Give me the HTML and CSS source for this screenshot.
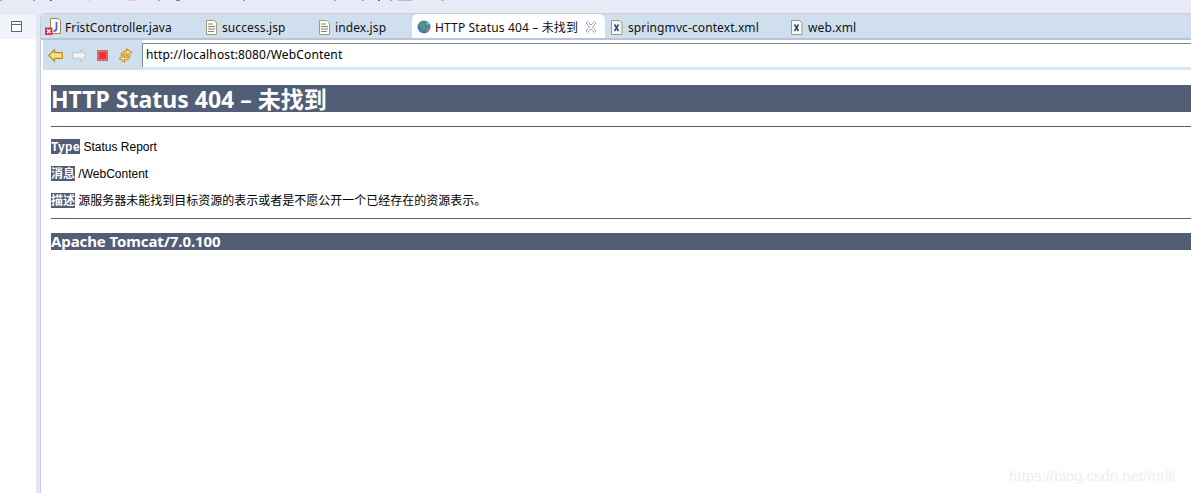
FILE: index.html
```html
<!DOCTYPE html>
<html lang="zh">
<head>
<meta charset="utf-8">
<title>HTTP Status 404</title>
<link rel="stylesheet" href="styles.css">
</head>
<body>
<div class="topbar">
  <svg class="traces" width="460" height="2" viewBox="0 0 460 2">
    <g fill="#9d9a86">
      <rect x="0" width="2" height="1"/><rect x="33" width="2" height="1"/><rect x="50" width="2" height="1" fill="#3f6f6a"/>
      <rect x="88" width="2" height="1" fill="#c9dccf"/><rect x="128" width="9" height="1" fill="#f0c6cc"/><rect x="158" width="2" height="1"/>
      <rect x="176" width="4" height="1" fill="#7d8090"/><rect x="243" width="2" height="1"/><rect x="334" width="2" height="1"/>
      <rect x="362" width="2" height="1"/><rect x="378" width="2" height="1" fill="#1f9a55"/><rect x="390" width="2" height="1"/>
      <rect x="398" width="14" height="1" fill="#bdbdb8"/><rect x="441" width="3" height="1" fill="#bdbdb8"/>
    </g>
  </svg>
</div>
<div class="main">
  <aside class="side">
    <div class="side-head">
      <svg class="restore" width="11" height="11" viewBox="0 0 11 11"><rect x="0.5" y="0.5" width="10" height="10" fill="#fff" stroke="#666"/><path d="M1 3.500H10" stroke="#666"/></svg>
    </div>
  </aside>
  <section class="editor">
    <div class="tabs">
      <div class="tab w1">
        <svg class="ico" width="18" height="18" viewBox="0 0 18 18"><path d="M6.500 .5H14L16.500 3V15.500H6.500Z" fill="#fff" stroke="#a2854e"/><path d="M12.500 4V10.500Q12.500 13 9.500 13" fill="none" stroke="#3f6fb0" stroke-width="1.800"/><rect x="1" y="9.500" width="7.500" height="7.500" fill="#d9344a"/><path d="M3 11.500l3.500 3.500M6.500 11.500L3 15" stroke="#fff" stroke-width="1.300"/></svg>
        <span>FristController.java</span>
      </div>
      <div class="tab w2">
        <svg class="ico" width="13" height="15" viewBox="0 0 13 15"><path d="M1.500 .5H9L11.500 3V14.500H1.500Z" fill="#fff" stroke="#a39a70"/><path d="M3 4H8" stroke="#c9703a"/><path d="M3 6.500H10" stroke="#4f9a63"/><path d="M3 9H10" stroke="#5a7fc0"/><path d="M3 11.500H9" stroke="#c9703a"/></svg>
        <span>success.jsp</span>
      </div>
      <div class="tab w3">
        <svg class="ico" width="13" height="15" viewBox="0 0 13 15"><path d="M1.500 .5H9L11.500 3V14.500H1.500Z" fill="#fff" stroke="#a39a70"/><path d="M3 4H8" stroke="#c9703a"/><path d="M3 6.500H10" stroke="#4f9a63"/><path d="M3 9H10" stroke="#5a7fc0"/><path d="M3 11.500H9" stroke="#c9703a"/></svg>
        <span>index.jsp</span>
      </div>
      <div class="tab tab-active">
        <svg class="ico" width="14" height="14" viewBox="0 0 14 14"><circle cx="7" cy="7" r="6.500" fill="#3f7fbf"/><path d="M2 4Q5 1 8 2L7 5L9 7L6 10L4 7L2 6Z" fill="#5f9a52"/><path d="M9 9L12 7.500L11.500 11L9.500 12Z" fill="#b5803c"/><path d="M9 2L12 4L10 5Z" fill="#a7d4ec"/></svg>
        <span class="tab-title">HTTP Status 404 – 未找到</span>
        <svg class="close" width="12" height="12" viewBox="0 0 12 12"><path d="M1 2L2.500 .5L6 4L9.500 .5L11 2L7.500 6L11 10L9.500 11.500L6 8L2.500 11.500L1 10L4.500 6Z" fill="#fff" stroke="#9ca0a4"/></svg>
      </div>
      <div class="tab w5">
        <svg class="ico" width="12" height="15" viewBox="0 0 12 15"><path d="M.5 .5H8.500L11 3V14.500H.5Z" fill="#f4f6fa" stroke="#a39a70"/><path d="M3.500 4.500L7.500 11M7.500 4.500L3.500 11" stroke="#2f4478" stroke-width="1.500"/></svg>
        <span>springmvc-context.xml</span>
      </div>
      <div class="tab w6">
        <svg class="ico" width="12" height="15" viewBox="0 0 12 15"><path d="M.5 .5H8.500L11 3V14.500H.5Z" fill="#f4f6fa" stroke="#a39a70"/><path d="M3.500 4.500L7.500 11M7.500 4.500L3.500 11" stroke="#2f4478" stroke-width="1.500"/></svg>
        <span>web.xml</span>
      </div>
    </div>
    <div class="tabline"></div>
    <div class="toolbar">
      <div class="tools">
        <svg width="15" height="13" viewBox="0 0 15 13"><path d="M6.500 .7L.8 6.500L6.500 12.300V9.300H14.300V3.700H6.500Z" fill="#fbe08a" stroke="#b98a1e" stroke-width="1.200"/></svg>
        <svg width="15" height="13" viewBox="0 0 15 13"><path d="M8.500 .7L14.200 6.500L8.500 12.300V9.300H.7V3.700H8.500Z" fill="#f2f3f3" stroke="#c8cbce" stroke-width="1.200"/></svg>
        <svg class="stop" width="11" height="11" viewBox="0 0 11 11"><rect x=".5" y=".5" width="10" height="10" fill="#ee3338" stroke="#c4686c"/><rect x="1.500" y="1.500" width="8" height="8" fill="none" stroke="#f26a6e"/></svg>
        <svg width="15" height="15" viewBox="0 0 15 15"><path d="M3 7.500Q3 3 8.500 3V.8L14 4.500L8.500 7.800V5.500Q5.500 5.500 3 7.500Z" fill="#fbd66a" stroke="#c08a1e"/><path d="M12 7.500Q12 12 6.500 12V14.200L1 10.500L6.500 7.200V9.500Q9.500 9.500 12 7.500Z" fill="#fbd66a" stroke="#c08a1e"/></svg>
      </div>
      <div class="url">http://localhost:8080/WebContent</div>
    </div>
    <div class="page">
      <h1>HTTP Status 404 – 未找到</h1>
      <hr>
      <p><b class="wide">Type</b> Status Report</p>
      <p><b>消息</b> /WebContent</p>
      <p><b>描述</b> 源服务器未能找到目标资源的表示或者是不愿公开一个已经存在的资源表示。</p>
      <hr class="hr2">
      <h3>Apache Tomcat/7.0.100</h3>
    </div>
  </section>
</div>
<div class="watermark">https://blog.csdn.net/mrlli</div>
</body>
</html>
```
FILE: styles.css
```css
* { box-sizing: border-box; }
html, body { margin: 0; height: 100%; overflow: hidden; }
body {
  width: 1191px;
  height: 493px;
  position: relative;
  background: #e3e7f6;
  font-family: "Liberation Sans", "Noto Sans CJK SC", sans-serif;
  color: #000;
}
.topbar { height: 13px; background: #e8eaf8; }
.traces { display: block; }
.main { display: flex; height: 480px; }
.side {
  width: 36px;
  background: #fff;
  border-top: 1px solid #e1e3ea;
  border-top-right-radius: 6px;
  overflow: hidden;
}
.side-head {
  height: 25px;
  background: #f2f4fb;
  display: flex;
  justify-content: flex-end;
  padding: 7px 14px 0 0;
}
.restore { display: block; }
.editor {
  flex: 1;
  min-width: 0;
  margin-left: 4px;
  background: #fff;
  border-left: 1px solid #c9ccd2;
  border-top: 1px solid #c8ccd4;
  border-top-left-radius: 6px;
  overflow: hidden;
}
.tabs {
  height: 24px;
  background: #cfdfee;
  display: flex;
  font-family: "Noto Sans", "Noto Sans CJK SC", sans-serif;
  font-size: 12px;
  letter-spacing: .1px;
  color: #111;
}
.tab {
  display: flex;
  align-items: center;
  padding: 2px 0 0 3px;
}
.w1 { width: 159px; }
.w2 { width: 113px; padding-left: 5px; }
.w3 { width: 99px; padding-left: 5px; }
.w5 { width: 181px; padding-left: 6px; }
.w6 { padding-left: 5px; }
.tab .ico { margin-right: 3px; flex: none; }
.w2 .ico, .w3 .ico { margin-right: 4px; }
.w5 .ico, .w6 .ico { margin-right: 5px; }
.tab-active {
  width: 193px;
  background: #fff;
  border-radius: 6px 6px 0 0;
  padding-left: 5px;
}
.tab-active .ico { margin-right: 4px; }
.tab-title { flex: 1; white-space: nowrap; letter-spacing: .15px; }
.close { margin-right: 8px; flex: none; }
.tabline { height: 2px; background: #b9c4dc; }
.toolbar {
  display: flex;
  height: 30px;
  background: #cfdfee;
  margin-left: 2px;
}
.tools {
  width: 99px;
  display: flex;
  align-items: center;
  gap: 9px;
  padding-left: 5px;
}
.stop { margin: 0 1px; }
.url {
  flex: 1;
  background: #fff;
  border-top: 3px solid #fff;
  font-family: "Noto Sans", sans-serif;
  font-size: 12px;
  letter-spacing: .15px;
  line-height: 24px;
  padding-left: 4px;
  box-shadow: inset 0 1px 0 #7f8a99, inset 1px 0 0 #7f8a99;
  border-bottom: 3px solid #d8e6f4;
}
.page { padding: 15px 0 0 10px; }
h1 {
  margin: 0;
  height: 27px;
  line-height: 29px;
  font-family: "Noto Sans", "Noto Sans CJK SC", sans-serif;
  font-size: 23px;
  font-weight: bold;
  color: #fff;
  background: #525d76;
}
hr {
  height: 1px;
  border: 0;
  margin: 14px 0 0;
  background: #525d76;
}
p {
  margin: 12px 0 0;
  font-size: 12px;
  line-height: 17px;
  height: 15px;
}
b { color: #fff; background: #525d76; padding-top: 1px; }
.wide { letter-spacing: .5px; }
.hr2 { margin-top: 10px; }
h3 {
  margin: 14px 0 0;
  height: 17px;
  line-height: 17px;
  font-family: "Noto Sans", sans-serif;
  font-size: 15px;
  letter-spacing: -.1px;
  font-weight: bold;
  color: #fff;
  background: #525d76;
}
.watermark {
  position: absolute;
  left: 1009px;
  top: 465px;
  font-family: "Liberation Sans", sans-serif;
  font-size: 15px;
  line-height: 21px;
  color: #eeeeee;
}
```
